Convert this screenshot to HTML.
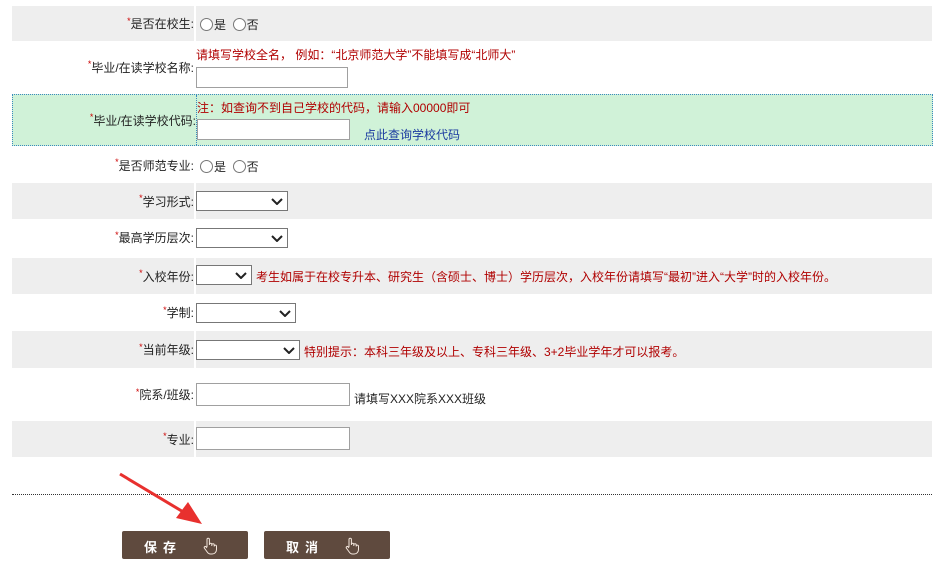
<!DOCTYPE html>
<html><head><meta charset="utf-8"><style>
body{margin:0;width:944px;height:570px;background:#fff;position:relative;font-family:"Liberation Sans","Noto Sans CJK SC",sans-serif;font-size:12px;color:#222;overflow:hidden}
.r{position:absolute;left:12px;width:920px}
.g .l,.g .v{background:#eeeeee}
.l{position:absolute;left:0;width:182px;top:0;bottom:0;text-align:right;display:flex;align-items:center;justify-content:flex-end}
.v{position:absolute;left:184px;right:0;top:0;bottom:0}
.s{color:#c00;font-size:9px;align-self:center;margin-top:-6px}
.in{position:absolute;left:0;width:152px;height:21px;border:1px solid #a0a0a0;box-sizing:border-box;background:#fff}
.sel{position:absolute;left:0;height:20px;border:1px solid #777;box-sizing:border-box;background:#fff}
.sel svg{position:absolute;right:4px;top:6px}
.red{color:#b00000;position:absolute;white-space:nowrap}
.rad{display:inline-block;width:11px;height:11px;border:1px solid #777;border-radius:50%;vertical-align:-2px;margin-right:1px;background:#fff}
.btn{position:absolute;top:531px;width:126px;height:28px;background:#5f4a3e;border-radius:2px;color:#fff;font-weight:bold;font-size:13px;box-sizing:border-box;padding:6px 0 0 22px;letter-spacing:6px}
.btn svg{position:absolute;left:80px;top:6px}
</style></head><body>
<div class="r g" style="top:6px;height:35px"><div class="l"><span class="s">*</span>是否在校生:</div><div class="v"><div style="position:absolute;left:4px;top:10px"><span class="rad"></span>是 &nbsp;<span class="rad"></span>否</div></div></div>
<div class="r" style="top:41px;height:52px"><div class="l"><span class="s">*</span>毕业/在读学校名称:</div><div class="v"><div class="red" style="left:0;top:5px">请填写学校全名， 例如：“北京师范大学”不能填写成“北师大”</div><div class="in" style="top:26px"></div></div></div>
<div class="r" style="top:94px;height:52px;background:#d0f2d8;border:1px dotted #3a8abf;box-sizing:border-box;width:921px"><div class="l" style="border-right:1px dotted #3a8abf;width:183px"><span class="s">*</span>毕业/在读学校代码:</div><div class="red" style="left:184px;top:4px">注：如查询不到自己学校的代码，请输入00000即可</div><div class="in" style="left:184px;top:24px;width:153px"></div><div style="position:absolute;left:351px;top:31px;color:#1a3aa0">点此查询学校代码</div></div>
<div class="r" style="top:147px;height:36px"><div class="l"><span class="s">*</span>是否师范专业:</div><div class="v"><div style="position:absolute;left:4px;top:11px"><span class="rad"></span>是 &nbsp;<span class="rad"></span>否</div></div></div>
<div class="r g" style="top:183px;height:36px"><div class="l"><span class="s">*</span>学习形式:</div><div class="v"><div class="sel" style="top:8px;width:92px"><svg width="12" height="7"><path d="M1 1L6 6L11 1" stroke="#222" stroke-width="2" fill="none"/></svg></div></div></div>
<div class="r" style="top:219px;height:37px"><div class="l"><span class="s">*</span>最高学历层次:</div><div class="v"><div class="sel" style="top:9px;width:92px"><svg width="12" height="7"><path d="M1 1L6 6L11 1" stroke="#222" stroke-width="2" fill="none"/></svg></div></div></div>
<div class="r g" style="top:258px;height:36px"><div class="l"><span class="s">*</span>入校年份:</div><div class="v"><div class="sel" style="top:7px;width:56px"><svg width="12" height="7"><path d="M1 1L6 6L11 1" stroke="#222" stroke-width="2" fill="none"/></svg></div><div class="red" style="left:60px;top:10px">考生如属于在校专升本、研究生（含硕士、博士）学历层次，入校年份请填写“最初”进入“大学”时的入校年份。</div></div></div>
<div class="r" style="top:294px;height:37px"><div class="l"><span class="s">*</span>学制:</div><div class="v"><div class="sel" style="top:9px;width:100px"><svg width="12" height="7"><path d="M1 1L6 6L11 1" stroke="#222" stroke-width="2" fill="none"/></svg></div></div></div>
<div class="r g" style="top:331px;height:37px"><div class="l"><span class="s">*</span>当前年级:</div><div class="v"><div class="sel" style="top:9px;width:104px"><svg width="12" height="7"><path d="M1 1L6 6L11 1" stroke="#222" stroke-width="2" fill="none"/></svg></div><div class="red" style="left:108px;top:12px">特别提示：本科三年级及以上、专科三年级、3+2毕业学年才可以报考。</div></div></div>
<div class="r" style="top:368px;height:53px"><div class="l"><span class="s">*</span>院系/班级:</div><div class="v"><div class="in" style="top:15px;width:154px;height:23px"></div><div style="position:absolute;left:158px;top:22px">请填写XXX院系XXX班级</div></div></div>
<div class="r g" style="top:421px;height:36px"><div class="l"><span class="s">*</span>专业:</div><div class="v"><div class="in" style="top:6px;width:154px;height:23px"></div></div></div>
<div style="position:absolute;left:12px;top:494px;width:920px;border-top:1px dotted #333"></div>
<svg style="position:absolute;left:118px;top:472px" width="90" height="56"><path d="M2 2L72 44" stroke="#e8302e" stroke-width="3"/><path d="M84 52L58 46L70 30Z" fill="#e8302e"/></svg>
<div class="btn" style="left:122px">保存<svg width="16" height="18" viewBox="0 0 16 18"><path d="M5 10V2.5a1.2 1.2 0 0 1 2.4 0V8M7.4 7.5a1.2 1.2 0 0 1 2.4 0V9M9.8 8a1.2 1.2 0 0 1 2.4 0V9.5M12.2 9a1.2 1.2 0 0 1 2.3 0v3.5c0 2.5-1.8 4.5-4.3 4.5H8.5c-1.5 0-2.5-.8-3.3-2L2.3 11a1.1 1.1 0 0 1 1.8-1.2L5 11" stroke="#f3e6dc" stroke-width="1" fill="none"/></svg></div>
<div class="btn" style="left:264px">取消<svg width="16" height="18" viewBox="0 0 16 18"><path d="M5 10V2.5a1.2 1.2 0 0 1 2.4 0V8M7.4 7.5a1.2 1.2 0 0 1 2.4 0V9M9.8 8a1.2 1.2 0 0 1 2.4 0V9.5M12.2 9a1.2 1.2 0 0 1 2.3 0v3.5c0 2.5-1.8 4.5-4.3 4.5H8.5c-1.5 0-2.5-.8-3.3-2L2.3 11a1.1 1.1 0 0 1 1.8-1.2L5 11" stroke="#f3e6dc" stroke-width="1" fill="none"/></svg></div>
</body></html>
